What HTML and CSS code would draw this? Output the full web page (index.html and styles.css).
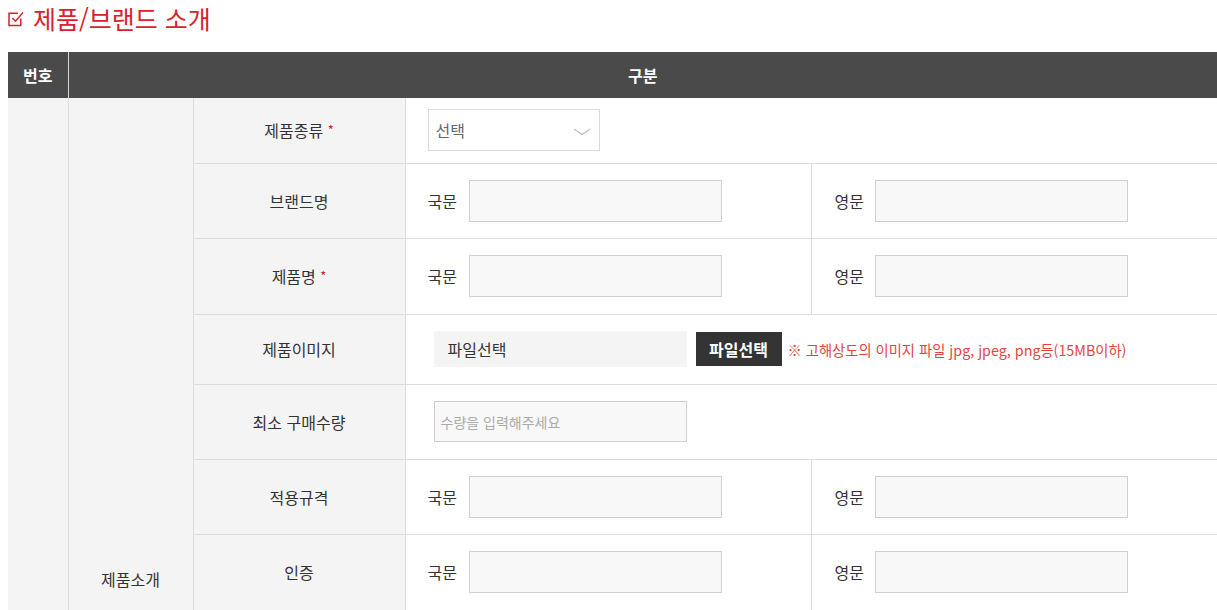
FILE: index.html
```html
<!DOCTYPE html>
<html lang="ko">
<head>
<meta charset="utf-8">
<title>제품/브랜드 소개</title>
<link rel="stylesheet" href="styles.css">
</head>
<body>
<h2 class="title">
  <svg class="title-icon" width="16" height="17" viewBox="0 0 16 17" aria-hidden="true">
    <path d="M12.8 8.5 V15.6 H1 V3.2 H10" fill="none" stroke="#d9222b" stroke-width="1.5"/>
    <path d="M4.4 8 L7.5 11.2 L15 2.6" fill="none" stroke="#d9222b" stroke-width="1.5"/>
  </svg>
  <span>제품/브랜드 소개</span>
</h2>
<table class="form">
  <colgroup>
    <col class="c-no"><col class="c-group"><col class="c-label"><col class="c-half"><col class="c-half">
  </colgroup>
  <thead>
    <tr>
      <th class="th-no">번호</th>
      <th colspan="4">구분</th>
    </tr>
  </thead>
  <tbody>
    <tr class="r-select">
      <td class="side" rowspan="13"></td>
      <td class="side group" rowspan="13">제품소개</td>
      <td class="label">제품종류 <em class="req">*</em></td>
      <td colspan="2" class="cell">
        <div class="select">
          <span>선택</span>
          <svg width="18" height="8" viewBox="0 0 18 8" aria-hidden="true"><path d="M1 1 L9 6.5 L17 1" fill="none" stroke="#bdbdbd" stroke-width="1.3"/></svg>
        </div>
      </td>
    </tr>
    <tr class="r-std">
      <td class="label">브랜드명</td>
      <td class="cell"><div class="pair"><span>국문</span><div class="input"></div></div></td>
      <td class="cell right"><div class="pair"><span>영문</span><div class="input"></div></div></td>
    </tr>
    <tr class="r-std2">
      <td class="label">제품명 <em class="req">*</em></td>
      <td class="cell"><div class="pair"><span>국문</span><div class="input"></div></div></td>
      <td class="cell right"><div class="pair"><span>영문</span><div class="input"></div></div></td>
    </tr>
    <tr class="r-file">
      <td class="label">제품이미지</td>
      <td colspan="2" class="cell wide">
        <div class="file">
          <div class="file-name">파일선택</div>
          <div class="file-btn">파일선택</div>
          <span class="note">※ 고해상도의 이미지 파일 jpg, jpeg, png등(15MB이하)</span>
        </div>
      </td>
    </tr>
    <tr class="r-std">
      <td class="label">최소 구매수량</td>
      <td colspan="2" class="cell wide"><div class="input qty">수량을 입력해주세요</div></td>
    </tr>
    <tr class="r-std">
      <td class="label">적용규격</td>
      <td class="cell"><div class="pair"><span>국문</span><div class="input"></div></div></td>
      <td class="cell right"><div class="pair"><span>영문</span><div class="input"></div></div></td>
    </tr>
    <tr class="r-std2">
      <td class="label">인증</td>
      <td class="cell"><div class="pair"><span>국문</span><div class="input"></div></div></td>
      <td class="cell right"><div class="pair"><span>영문</span><div class="input"></div></div></td>
    </tr>
    <tr class="r-std">
      <td class="label">모델명</td>
      <td class="cell"><div class="pair"><span>국문</span><div class="input"></div></div></td>
      <td class="cell right"><div class="pair"><span>영문</span><div class="input"></div></div></td>
    </tr>
    <tr class="r-std">
      <td class="label">제조사</td>
      <td class="cell"><div class="pair"><span>국문</span><div class="input"></div></div></td>
      <td class="cell right"><div class="pair"><span>영문</span><div class="input"></div></div></td>
    </tr>
    <tr class="r-std">
      <td class="label">원산지</td>
      <td class="cell"><div class="pair"><span>국문</span><div class="input"></div></div></td>
      <td class="cell right"><div class="pair"><span>영문</span><div class="input"></div></div></td>
    </tr>
    <tr class="r-std">
      <td class="label">주요특징</td>
      <td class="cell"><div class="pair"><span>국문</span><div class="input"></div></div></td>
      <td class="cell right"><div class="pair"><span>영문</span><div class="input"></div></div></td>
    </tr>
    <tr class="r-std">
      <td class="label">키워드</td>
      <td class="cell"><div class="pair"><span>국문</span><div class="input"></div></div></td>
      <td class="cell right"><div class="pair"><span>영문</span><div class="input"></div></div></td>
    </tr>
    <tr class="r-std">
      <td class="label">제품설명</td>
      <td class="cell"><div class="pair"><span>국문</span><div class="input"></div></div></td>
      <td class="cell right"><div class="pair"><span>영문</span><div class="input"></div></div></td>
    </tr>
  </tbody>
</table>
</body>
</html>
```

FILE: styles.css
```css
html, body {
  margin: 0;
  padding: 0;
  background: #fff;
}
body {
  padding: 0 0 0 8px;
  font-family: "Noto Sans CJK KR", "Noto Sans", sans-serif;
  color: #333;
  overflow: hidden;
}
.title {
  margin: 0;
  height: 52px;
  display: flex;
  align-items: flex-start;
  gap: 9px;
  padding-top: 0;
  box-sizing: border-box;
  font-size: 25px;
  line-height: 36px;
  font-weight: 400;
  color: #d9222b;
}
.title-icon {
  margin-top: 10px;
  flex: none;
}
.form {
  border-collapse: collapse;
  table-layout: fixed;
  width: 1209px;
  font-size: 16px;
}
.c-no { width: 60px; }
.c-group { width: 125px; }
.c-label { width: 212px; }
.c-half { width: 406px; }
.form th {
  background: #4a4a4a;
  color: #fff;
  font-weight: 700;
  height: 46px;
  padding: 0;
  text-align: center;
  border-left: 1px solid #d8d8d8;
}
.form th.th-no { border-left: none; }
.form td {
  padding: 0;
  border: 1px solid #dcdcdc;
}
.form td.side {
  background: #f4f4f4;
  border-top: none;
  border-left: none;
}
.form td.group {
  text-align: center;
  vertical-align: middle;
  color: #333;
}
.form td.label {
  background: #f4f4f4;
  text-align: center;
  color: #333;
}
.req {
  font-style: normal;
  color: #c0282d;
  font-size: 13px;
  position: relative;
  top: -2px;
}
.r-select { height: 65px; }
.r-std { height: 75px; }
.r-std2 { height: 76px; }
.r-file { height: 70px; }
.cell {
  padding-left: 22px !important;
  vertical-align: middle;
}
.cell.right { padding-left: 23px !important; }
.cell.wide { padding-left: 28px !important; }
.form tbody tr:first-child td { border-top: none; }
.select {
  width: 172px;
  height: 42px;
  box-sizing: border-box;
  border: 1px solid #dadada;
  display: flex;
  align-items: center;
  justify-content: space-between;
  padding: 0 8px 0 7px;
  color: #666;
  font-size: 16px;
}
.select svg { margin-top: 3px; }
.pair {
  display: flex;
  align-items: center;
  gap: 12px;
}
.cell.right .pair { gap: 11px; }
.pair span {
  font-size: 16px;
  color: #333;
}
.input {
  width: 253px;
  height: 42px;
  box-sizing: border-box;
  background: #f8f8f8;
  border: 1px solid #cfcfcf;
}
.input.qty {
  height: 41px;
  display: flex;
  align-items: center;
  padding-left: 6px;
  font-size: 14px;
  color: #aaa;
}
.file {
  display: flex;
  align-items: center;
}
.file-name {
  width: 253px;
  height: 36px;
  box-sizing: border-box;
  background: #f4f4f4;
  display: flex;
  align-items: center;
  padding-left: 14px;
  font-size: 16px;
  color: #333;
}
.file-btn {
  margin-left: 9px;
  width: 86px;
  height: 34px;
  background: #333;
  color: #fff;
  font-weight: 700;
  font-size: 16px;
  display: flex;
  align-items: center;
  justify-content: center;
}
.note {
  margin-left: 6px;
  font-size: 14.3px;
  color: #e0463f;
}
```
